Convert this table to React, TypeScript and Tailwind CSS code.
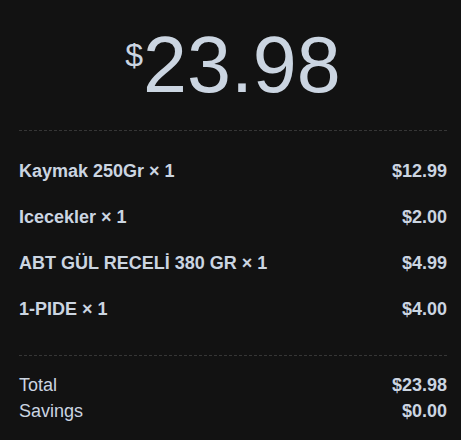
const ITEMS = [
  { name: "Kaymak 250Gr", qty: 1, price: "$12.99" },
  { name: "Icecekler", qty: 1, price: "$2.00" },
  { name: "ABT GÜL RECELİ 380 GR", qty: 1, price: "$4.99" },
  { name: "1-PIDE", qty: 1, price: "$4.00" },
];

export default function App() {
  return (
    <div className="min-h-[440px] bg-[#121212] pl-[19px] pr-[14px] font-['Liberation_Sans',Arial,sans-serif] text-[#cbd5e1]">
      {/* Big total */}
      <div className="flex justify-center pt-[20px] pb-[20px]">
        <div className="flex items-start leading-none">
          <span className="mt-[19px] text-[32px]">$</span>
          <span className="text-[79px] leading-[90px]">23.98</span>
        </div>
      </div>

      <div className="border-t border-dashed border-[#363636]" />

      {/* Line items */}
      <div className="pt-[17px] pb-[23px]">
        {ITEMS.map((item) => (
          <div key={item.name} className="flex items-center justify-between py-[11px] text-[18px] font-bold leading-6">
            <span>
              {item.name} × {item.qty}
            </span>
            <span>{item.price}</span>
          </div>
        ))}
      </div>

      <div className="border-t border-dashed border-[#363636]" />

      {/* Summary */}
      <div className="pt-[16px] text-[18px] leading-[26px]">
        <div className="flex justify-between">
          <span>Total</span>
          <span className="font-bold">$23.98</span>
        </div>
        <div className="flex justify-between">
          <span>Savings</span>
          <span className="font-bold">$0.00</span>
        </div>
      </div>
    </div>
  );
}
